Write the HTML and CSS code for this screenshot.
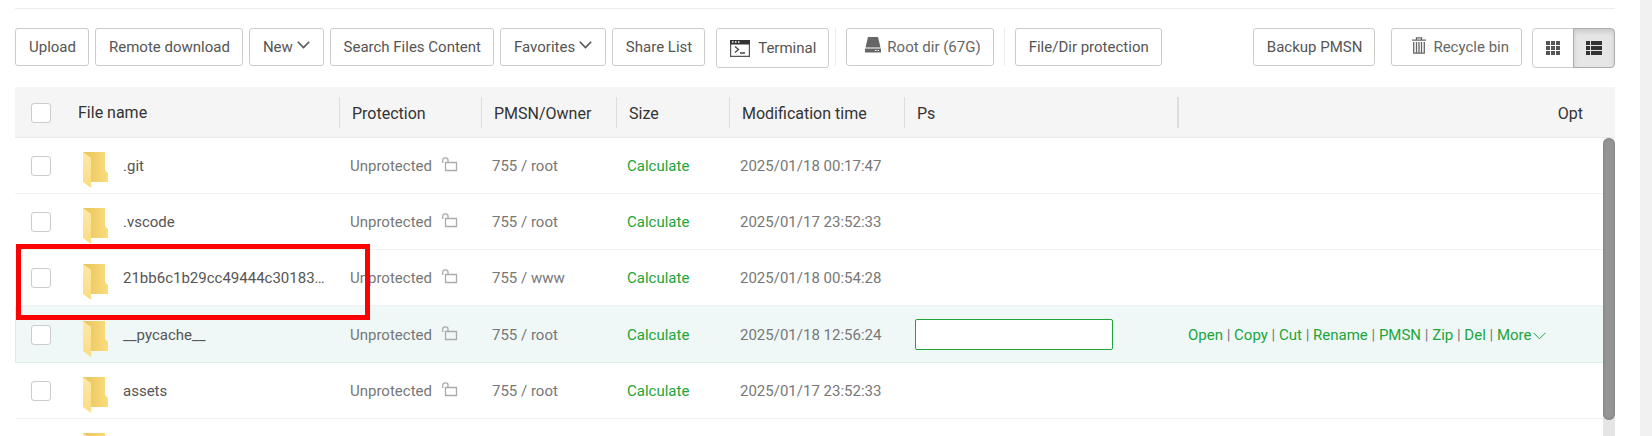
FILE: index.html
```html
<!DOCTYPE html>
<html lang="en">
<head>
<meta charset="utf-8">
<title>Files</title>
<link rel="stylesheet" href="styles.css">
</head>
<body>
<svg class="defs" aria-hidden="true">
  <defs>
    <linearGradient id="back" x1="0" y1="0" x2="1" y2="0"><stop offset="0" stop-color="#e9c35c"/><stop offset="1" stop-color="#fbdc7c"/></linearGradient>
    <linearGradient id="front" x1="0" y1="0" x2="0" y2="1"><stop offset="0" stop-color="#ffe9a6"/><stop offset="1" stop-color="#fbdc82"/></linearGradient>
  </defs>
  <symbol id="folder" viewBox="0 0 26 37"><path d="M0 1H22V19L25 22V31H5L0 20Z" fill="url(#back)"/><path d="M0 1L8 7V37L0 31Z" fill="url(#front)"/></symbol>
  <symbol id="lock" viewBox="0 0 16 15"><path d="M4.500 5.500H14.500V13.500H3.500V5.500H4.500M.7 6V3.500Q.7 .8 3.200 .8H3.800Q6 .8 6 3V5" fill="none" stroke="#aaa" stroke-width="1.300"/></symbol>
  <symbol id="chev" viewBox="0 0 13 8"><path d="M.8 .8L6.500 6.500L12.200 .8" fill="none" stroke="currentColor" stroke-width="1.600"/></symbol>
</svg>
<main class="page">
  <div class="toolbar">
    <div class="group">
      <button class="btn">Upload</button>
      <button class="btn">Remote download</button>
      <button class="btn">New <svg class="chev"><use href="#chev"/></svg></button>
      <button class="btn">Search Files Content</button>
      <button class="btn">Favorites <svg class="chev"><use href="#chev"/></svg></button>
      <button class="btn">Share List</button>
    </div>
    <button class="btn tall terminal"><svg class="term" viewBox="0 0 20 17"><path d="M.6 .6H19.400V16.400H.6Z" fill="#fff" stroke="#555" stroke-width="1.200"/><path d="M0 0H20V4.500H0Z" fill="#333"/><path d="M2 2H3.500M5 2H6.500M8 2H9.500" stroke="#fff" stroke-width="1.300"/><path d="M5 6.500L8.500 9.500L5 12.500M10 13H15" fill="none" stroke="#444" stroke-width="1.300"/></svg>Terminal</button>
    <div class="fenced"><button class="btn soft disk"><svg class="drive" viewBox="0 0 16 16"><path d="M3 0H13L15.500 10.500H.5Z" fill="#666"/><path d="M0 11.500H16V15.500H0Z" fill="#666"/><path d="M10 13.500H11.500M12.500 13.500H14" stroke="#fff"/></svg>Root dir (67G)</button></div>
    <button class="btn protect">File/Dir protection</button>
    <button class="btn backup">Backup PMSN</button>
    <button class="btn soft bin"><svg class="trash" viewBox="0 0 14 17"><path d="M0 3.200H14M4.500 3V.8H9.500V3M1.700 5V16.200H12.300V5M4.500 5V16M7 5V16M9.500 5V16" fill="none" stroke="#666" stroke-width="1.300"/></svg>Recycle bin</button>
    <div class="views">
      <button class="view" aria-label="Grid view"><svg class="vi" viewBox="0 0 16 14"><path d="M1 0H5V4H1ZM6 0H10V4H6ZM11 0H15V4H11ZM1 5H5V9H1ZM6 5H10V9H6ZM11 5H15V9H11ZM1 10H5V14H1ZM6 10H10V14H6ZM11 10H15V14H11Z" fill="#555"/></svg></button>
      <button class="view active" aria-label="List view" aria-pressed="true"><svg class="vi" viewBox="0 0 16 14"><path d="M0 0H4V4H0ZM5 0H16V4H5ZM0 5H4V9H0ZM5 5H16V9H5ZM0 10H4V14H0ZM5 10H16V14H5Z" fill="#333"/></svg></button>
    </div>
  </div>
  <div class="files">
    <table>
      <colgroup><col class="c-check"><col class="c-name"><col class="c-prot"><col class="c-owner"><col class="c-size"><col class="c-time"><col class="c-ps"><col></colgroup>
      <thead><tr>
        <th class="check"><input type="checkbox" aria-label="Select all"></th>
        <th class="first">File name</th>
        <th><span>Protection</span></th><th><span>PMSN/Owner</span></th><th><span>Size</span></th><th><span>Modification time</span></th><th><span>Ps</span></th>
        <th class="opt"><span>Opt</span></th>
      </tr></thead>
      <tbody>
        <tr><td class="check"><input type="checkbox" aria-label="Select .git"></td><td><div class="name"><svg class="folder"><use href="#folder"/></svg><span>.git</span></div></td><td>Unprotected <svg class="lock"><use href="#lock"/></svg></td><td>755 / root</td><td><a href="#">Calculate</a></td><td>2025/01/18 00:17:47</td><td></td><td></td></tr>
        <tr><td class="check"><input type="checkbox" aria-label="Select .vscode"></td><td><div class="name"><svg class="folder"><use href="#folder"/></svg><span>.vscode</span></div></td><td>Unprotected <svg class="lock"><use href="#lock"/></svg></td><td>755 / root</td><td><a href="#">Calculate</a></td><td>2025/01/17 23:52:33</td><td></td><td></td></tr>
        <tr><td class="check"><input type="checkbox" aria-label="Select 21bb6c1b29cc49444c30183"></td><td><div class="name"><svg class="folder"><use href="#folder"/></svg><span>21bb6c1b29cc49444c30183…</span></div></td><td>Unprotected <svg class="lock"><use href="#lock"/></svg></td><td>755 / www</td><td><a href="#">Calculate</a></td><td>2025/01/18 00:54:28</td><td></td><td></td></tr>
        <tr class="hover"><td class="check"><input type="checkbox" aria-label="Select __pycache__"></td><td><div class="name"><svg class="folder"><use href="#folder"/></svg><span>__pycache__</span></div></td><td>Unprotected <svg class="lock"><use href="#lock"/></svg></td><td>755 / root</td><td><a href="#">Calculate</a></td><td>2025/01/18 12:56:24</td><td><input class="note" type="text" aria-label="Ps"></td><td><a href="#">Open</a> | <a href="#">Copy</a> | <a href="#">Cut</a> | <a href="#">Rename</a> | <a href="#">PMSN</a> | <a href="#">Zip</a> | <a href="#">Del</a> | <a href="#">More<svg class="more" viewBox="0 0 13 8"><path d="M.5 .8L6.500 6.800L12.500 .8" fill="none" stroke="currentColor"/></svg></a></td></tr>
        <tr><td class="check"><input type="checkbox" aria-label="Select assets"></td><td><div class="name"><svg class="folder"><use href="#folder"/></svg><span>assets</span></div></td><td>Unprotected <svg class="lock"><use href="#lock"/></svg></td><td>755 / root</td><td><a href="#">Calculate</a></td><td>2025/01/17 23:52:33</td><td></td><td></td></tr>
        <tr><td class="check"><input type="checkbox" aria-label="Select folder"></td><td><div class="name"><svg class="folder"><use href="#folder"/></svg></div></td><td></td><td></td><td></td><td></td><td></td><td></td></tr>
      </tbody>
    </table>
    <div class="track"><div class="thumb"></div></div>
    <div class="marker"></div>
  </div>
</main>
</body>
</html>
```
FILE: styles.css
```css
* { box-sizing: border-box; }
body { margin: 0; height: 100vh; overflow: hidden; background: #f1f1f1; font: 15px/20px Roboto, sans-serif; color: #777; }
.defs { position: absolute; width: 0; height: 0; }
.page { height: 100vh; margin-right: 12px; padding: 8px 25px 0 15px; background: #fff; overflow: hidden; }
.toolbar { display: flex; align-items: flex-start; border-top: 1px solid #ebebeb; padding: 19px 0; }
.group { display: flex; gap: 6px; }
.btn { height: 38px; padding: 0 12px 0 13px; border: 1px solid #ccc; border-radius: 3px; background: #fff; color: #555; font: inherit; white-space: nowrap; }
.soft { color: #666; }
.tall { height: 40px; }
.terminal { display: flex; align-items: center; gap: 8px; margin-left: 11px; }
.term { width: 20px; height: 17px; }
.fenced { display: flex; margin: 0 10px 0 6px; padding: 0 10px; border: solid #ebebeb; border-width: 0 1px; }
.disk, .bin { padding-left: 18px; }
.drive { width: 16px; height: 16px; margin-right: 6px; vertical-align: -1px; }
.trash { width: 14px; height: 17px; margin: 0 7px 0 2px; vertical-align: -2px; }
.backup { margin-left: auto; }
.bin { margin-left: 16px; }
.views { display: flex; margin-left: 10px; }
.view { display: flex; align-items: center; justify-content: center; width: 42px; height: 40px; padding: 0; border: 1px solid #ccc; border-radius: 4px 0 0 4px; background: #fff; }
.view.active { margin-left: -1px; border-color: #adadad; border-radius: 0 4px 4px 0; background: #e6e6e6; box-shadow: inset 0 3px 5px rgba(0, 0, 0, .125); }
.vi { width: 16px; height: 14px; }
.chev { width: 13px; height: 8px; margin-right: 1px; vertical-align: 3px; }
.files { position: relative; }
table { width: 100%; table-layout: fixed; border-collapse: separate; border-spacing: 0; }
.c-check { width: 55px; }
.c-name { width: 269px; }
.c-prot { width: 142px; }
.c-owner { width: 135px; }
.c-size { width: 113px; }
.c-time { width: 175px; }
.c-ps { width: 273px; }
th { height: 51px; padding: 0; border-bottom: 1px solid #e8e8e8; background: #f5f5f5; color: #333; font-size: 16px; font-weight: 400; text-align: left; }
th.first { padding: 2px 0 0 8px; }
th span { display: block; padding: 2px 0 0 12px; border-left: 1px solid #ddd; line-height: 29px; }
th.opt span { padding-right: 32px; border-left-width: 2px; text-align: right; }
td { height: 56px; padding: 0 0 0 11px; border-bottom: 1px solid #f0f0f0; white-space: nowrap; }
td.check { padding-left: 16px; }
th.check { padding: 2px 0 0 16px; }
.hover td { height: 57px; border-top: 1px solid #eff8f7; border-bottom-color: #d8eee9; background: #eff8f7; }
.hover td:first-child { box-shadow: inset 1px 0 #d8eee9; }
input[type="checkbox"] { appearance: none; display: block; width: 20px; height: 20px; margin: 0; border: 1px solid #ccc; border-radius: 3px; background: #fff; }
.name { display: flex; align-items: center; gap: 14px; padding-left: 2px; color: #555; }
.folder { width: 26px; height: 37px; margin-top: 7px; }
.lock { width: 16px; height: 15px; margin-left: 6px; vertical-align: -1px; }
a { color: #20a53a; text-decoration: none; }
.note { display: block; width: 198px; height: 31px; border: 1px solid #20a53a; border-radius: 2px; background: #fff; font: inherit; }
.more { width: 13px; height: 8px; margin-left: 2px; }
.track { position: absolute; top: 51px; right: 0; bottom: 0; width: 12px; background: #e5e5e5; border-radius: 6px 6px 0 0; }
.thumb { height: 282px; border-radius: 6px; background: #959595; box-shadow: inset 0 0 3px #777; }
.marker { position: absolute; top: 157px; left: 1px; width: 354px; height: 76px; border: 5px solid #f00; }
```
